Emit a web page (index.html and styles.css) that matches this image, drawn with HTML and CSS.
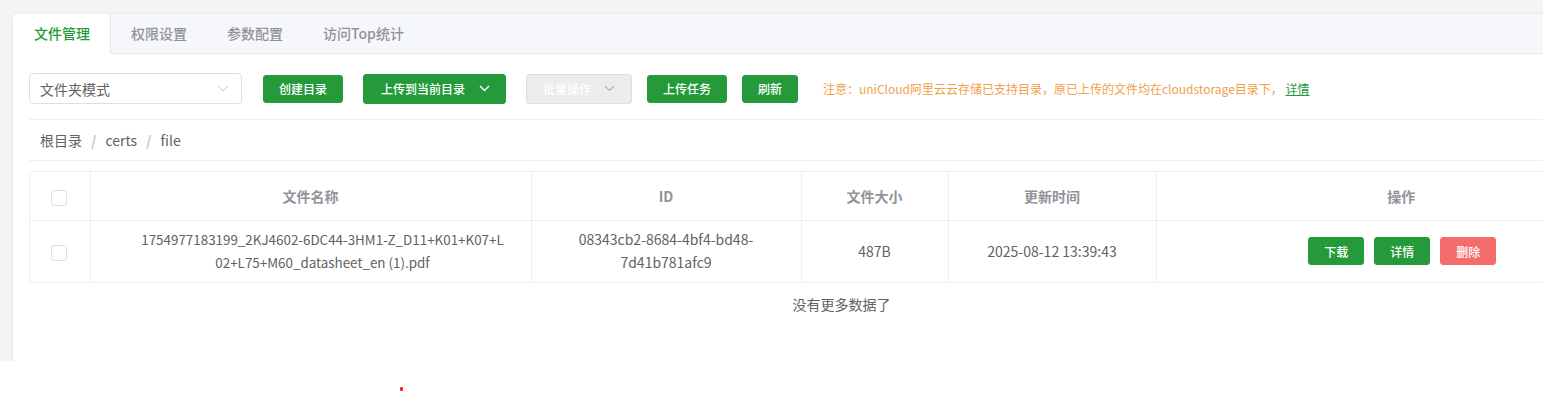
FILE: index.html
```html
<!DOCTYPE html>
<html lang="zh-CN">
<head>
    <meta charset="UTF-8">
    <meta name="viewport" content="width=device-width, initial-scale=1.0">
    <title>文件管理</title>
    <link rel="stylesheet" href="styles.css">
</head>
<body>
    <div class="page">
        <div class="card">
            <!-- 标签页 -->
            <div class="tabs">
                <div class="tab active">文件管理</div>
                <div class="tab">权限设置</div>
                <div class="tab">参数配置</div>
                <div class="tab">访问Top统计</div>
            </div>

            <div class="content">
                <!-- 工具栏 -->
                <div class="toolbar">
                    <div class="select">
                        <span>文件夹模式</span>
                        <svg class="chevron" width="12" height="7" viewBox="0 0 12 7"><path d="M1 1l5 5 5-5" fill="none" stroke="#c0c4cc" stroke-width="1"/></svg>
                    </div>
                    <button class="btn first w80">创建目录</button>
                    <button class="btn tall upload">上传到当前目录
                        <svg width="11" height="7" viewBox="0 0 11 7"><path d="M1 1l4.5 4.5L10 1" fill="none" stroke="#fff" stroke-width="1.4"/></svg>
                    </button>
                    <button class="btn tall disabled">批量操作
                        <svg width="11" height="7" viewBox="0 0 11 7"><path d="M1 1l4.5 4.5L10 1" fill="none" stroke="#b0b0b0" stroke-width="1.2"/></svg>
                    </button>
                    <button class="btn near w80">上传任务</button>
                    <button class="btn near w56">刷新</button>
                    <div class="notice">注意：uniCloud阿里云云存储已支持目录，原已上传的文件均在cloudstorage目录下， <a href="#">详情</a></div>
                </div>

                <!-- 面包屑 -->
                <div class="breadcrumb">
                    <span>根目录</span>
                    <span class="sep">/</span>
                    <span>certs</span>
                    <span class="sep">/</span>
                    <span>file</span>
                </div>

                <!-- 文件列表 -->
                <div class="table-wrap">
                    <table class="table">
                        <colgroup>
                            <col style="width: 60px">
                            <col style="width: 441px">
                            <col style="width: 270px">
                            <col style="width: 147px">
                            <col style="width: 208px">
                            <col>
                        </colgroup>
                        <thead>
                            <tr>
                                <th><span class="checkbox"></span></th>
                                <th>文件名称</th>
                                <th>ID</th>
                                <th>文件大小</th>
                                <th>更新时间</th>
                                <th>操作</th>
                            </tr>
                        </thead>
                        <tbody>
                            <tr>
                                <td><span class="checkbox"></span></td>
                                <td class="name">1754977183199_2KJ4602-6DC44-3HM1-Z_D11+K01+K07+L<br>02+L75+M60_datasheet_en (1).pdf</td>
                                <td>08343cb2-8684-4bf4-bd48-<br>7d41b781afc9</td>
                                <td>487B</td>
                                <td>2025-08-12 13:39:43</td>
                                <td>
                                    <div class="actions">
                                        <button class="btn w56">下载</button>
                                        <button class="btn w56">详情</button>
                                        <button class="btn w56 danger">删除</button>
                                    </div>
                                </td>
                            </tr>
                        </tbody>
                    </table>
                </div>

                <div class="loadmore">没有更多数据了</div>
            </div>
        </div>
    </div>
    <span class="dot"></span>
</body>
</html>
```

FILE: styles.css
```css
* {
    box-sizing: border-box;
    margin: 0;
    padding: 0;
}
body {
    font-family: "Noto Sans CJK SC", "Noto Sans", sans-serif;
    background: #fff;
    color: #606266;
    position: relative;
    min-height: 393px;
}
.page {
    height: 361px;
    background: #f5f5f5;
    padding: 14px 0 0 13px;
    overflow: hidden;
}
.card {
    width: 1700px;
    height: 420px;
    background: #fff;
    border-radius: 4px 0 0 0;
    box-shadow: 0 1px 6px rgba(0, 0, 0, 0.08);
}
.tabs {
    display: flex;
    height: 40px;
    background: #f5f7fa;
    border-bottom: 1px solid #e4e7ed;
    border-radius: 4px 0 0 0;
}
.tab {
    padding: 0 20px;
    line-height: 39px;
    font-size: 14px;
    font-weight: 500;
    color: #909399;
}
.tab.active {
    background: #fff;
    color: #1f9a3a;
    height: 40px;
    padding-left: 21px;
    border-right: 1px solid #e4e7ed;
    border-radius: 4px 0 0 0;
}
.content {
    padding: 0 16px;
}
.toolbar {
    display: flex;
    align-items: center;
    margin-top: 19px;
    height: 31px;
    gap: 20px;
}
.select {
    width: 213px;
    height: 31px;
    border: 1px solid #dcdfe6;
    border-radius: 4px;
    padding: 0 10px;
    display: flex;
    align-items: center;
    justify-content: space-between;
    font-size: 14px;
    color: #606266;
}
.select .chevron {
    margin-right: 2px;
}
.btn {
    height: 28px;
    padding: 0;
    border: 1px solid #249a3b;
    border-radius: 3px;
    background: #249a3b;
    color: #fff;
    font-family: inherit;
    font-size: 12px;
    font-weight: 500;
    white-space: nowrap;
    display: inline-flex;
    align-items: center;
    justify-content: center;
    cursor: pointer;
}
.btn.w80 {
    width: 80px;
}
.btn.w56 {
    width: 56px;
}
.btn.first {
    margin-left: 1px;
}
.btn.tall {
    height: 30px;
}
.btn.upload {
    width: 143px;
    padding: 0 15px 0 17px;
    justify-content: space-between;
}
.btn.disabled {
    width: 106px;
    background: #ececec;
    border-color: #dedede;
    color: #fff;
    justify-content: space-between;
    padding: 0 16px;
}
.btn.near {
    margin-left: -5px;
}
.notice {
    margin-left: 5px;
    font-size: 12px;
    color: #f0a04b;
}
.notice a {
    color: #1f9a3a;
    text-decoration: underline;
}
.breadcrumb {
    margin-top: 15px;
    border-top: 1px solid #ebeef5;
    border-bottom: 1px solid #ebeef5;
    height: 42px;
    padding-left: 11px;
    display: flex;
    align-items: center;
    font-size: 14px;
    color: #606266;
}
.breadcrumb .sep {
    margin: 0 9px;
    color: #c0c4cc;
    font-weight: bold;
}
.table-wrap {
    margin-top: 10px;
    width: 1618px;
    border: 1px solid #ebeef5;
    border-radius: 4px;
    overflow: hidden;
}
.table {
    width: 100%;
    border-collapse: collapse;
    table-layout: fixed;
}
.table th,
.table td {
    text-align: center;
    border-left: 1px solid #ebeef5;
    font-size: 14px;
}
.table th:first-child,
.table td:first-child {
    border-left: none;
}
.table th {
    height: 48px;
    border-bottom: 1px solid #ebeef5;
    color: #909399;
    font-weight: bold;
}
.table td {
    height: 62px;
    line-height: 23px;
    color: #606266;
}
.table td.name {
    font-size: 13.4px;
    padding-left: 24px;
}
.checkbox {
    display: inline-block;
    width: 16px;
    height: 16px;
    border: 1px solid #dcdfe6;
    border-radius: 3px;
    vertical-align: middle;
    margin-right: 2px;
}
.actions {
    display: flex;
    justify-content: center;
    gap: 10px;
    padding-left: 2px;
}
.btn.danger {
    background: #f56c6c;
    border-color: #f56c6c;
}
.loadmore {
    width: 1625px;
    padding-top: 12px;
    line-height: 18px;
    text-align: center;
    font-size: 14px;
    color: #606266;
}
.dot {
    position: absolute;
    left: 400px;
    top: 387px;
    width: 3px;
    height: 4px;
    border-radius: 1px;
    background: #f22;
}
```
